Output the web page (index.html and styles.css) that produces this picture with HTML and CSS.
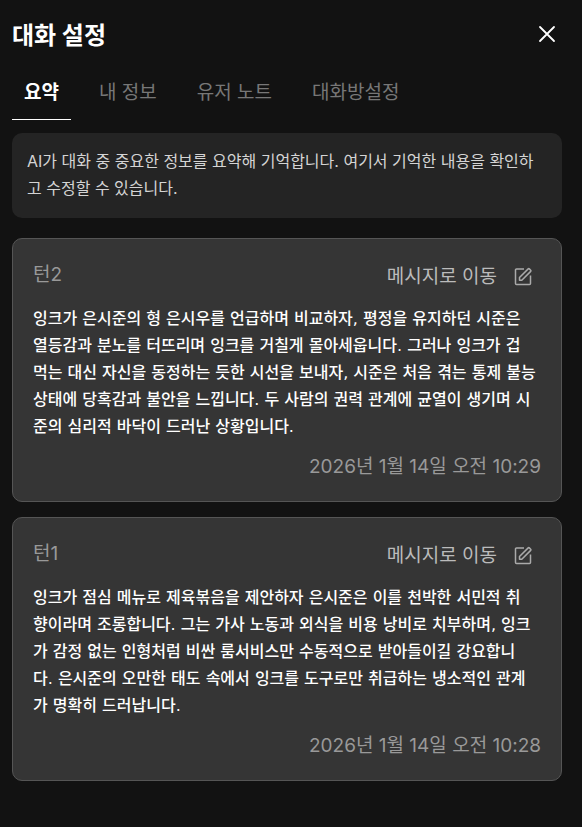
FILE: index.html
```html
<!DOCTYPE html>
<html lang="ko">
<head>
  <meta charset="UTF-8" />
  <meta name="viewport" content="width=device-width, initial-scale=1.0"/>
  <title>대화 설정</title>
  <link rel="stylesheet" href="styles.css">
</head>
<body>

  <header class="header">
    <h1>대화 설정</h1>
    <button class="icon-btn close" type="button" aria-label="닫기">
      <svg width="24" height="24" viewBox="0 0 24 24" fill="none" stroke="currentColor" stroke-width="1.8" stroke-linecap="round">
        <path d="M5 5l14 14M19 5L5 19"/>
      </svg>
    </button>
  </header>

  <nav class="tabs">
    <button class="tab active" type="button">요약</button>
    <button class="tab" type="button">내 정보</button>
    <button class="tab" type="button">유저 노트</button>
    <button class="tab" type="button">대화방설정</button>
  </nav>

  <main>
    <p class="info">AI가 대화 중 중요한 정보를 요약해 기억합니다. 여기서 기억한 내용을 확인하<br>고 수정할 수 있습니다.</p>

    <article class="card">
      <div class="card-head">
        <span class="turn">턴2</span>
        <div class="actions">
          <button class="move" type="button">메시지로 이동</button>
          <button class="icon-btn" type="button" aria-label="수정">
            <svg width="20" height="20" viewBox="0 0 20 20" fill="none" stroke="currentColor" stroke-width="1.5" stroke-linejoin="round">
              <path d="M11 2H3.500a1 1 0 0 0-1 1v13.500a1 1 0 0 0 1 1h13a1 1 0 0 0 1-1V8.500"/>
              <path d="M6.500 10.500l8.700-8.600a.8.800 0 0 1 1.100 0l1.400 1.400a.8.800 0 0 1 0 1.100l-8.900 8.900H6.500z"/>
            </svg>
          </button>
        </div>
      </div>
      <p class="summary">잉크가 은시준의 형 은시우를 언급하며 비교하자, 평정을 유지하던 시준은<br>열등감과 분노를 터뜨리며 잉크를 거칠게 몰아세웁니다. 그러나 잉크가 겁<br>먹는 대신 자신을 동정하는 듯한 시선을 보내자, 시준은 처음 겪는 통제 불능<br>상태에 당혹감과 불안을 느낍니다. 두 사람의 권력 관계에 균열이 생기며 시<br>준의 심리적 바닥이 드러난 상황입니다.</p>
      <time class="date" datetime="2026-01-14T10:29">2026년 1월 14일 오전 10:29</time>
    </article>

    <article class="card">
      <div class="card-head">
        <span class="turn">턴1</span>
        <div class="actions">
          <button class="move" type="button">메시지로 이동</button>
          <button class="icon-btn" type="button" aria-label="수정">
            <svg width="20" height="20" viewBox="0 0 20 20" fill="none" stroke="currentColor" stroke-width="1.5" stroke-linejoin="round">
              <path d="M11 2H3.500a1 1 0 0 0-1 1v13.500a1 1 0 0 0 1 1h13a1 1 0 0 0 1-1V8.500"/>
              <path d="M6.500 10.500l8.700-8.600a.8.800 0 0 1 1.100 0l1.400 1.400a.8.800 0 0 1 0 1.100l-8.900 8.900H6.500z"/>
            </svg>
          </button>
        </div>
      </div>
      <p class="summary">잉크가 점심 메뉴로 제육볶음을 제안하자 은시준은 이를 천박한 서민적 취<br>향이라며 조롱합니다. 그는 가사 노동과 외식을 비용 낭비로 치부하며, 잉크<br>가 감정 없는 인형처럼 비싼 룸서비스만 수동적으로 받아들이길 강요합니<br>다. 은시준의 오만한 태도 속에서 잉크를 도구로만 취급하는 냉소적인 관계<br>가 명확히 드러납니다.</p>
      <time class="date" datetime="2026-01-14T10:28">2026년 1월 14일 오전 10:28</time>
    </article>
  </main>

</body>
</html>
```
FILE: styles.css
```css
* {
  box-sizing: border-box;
}

body {
  margin: 0;
  padding: 20px 20px 20px 12px;
  min-height: 100vh;
  background: #121212;
  color: #fff;
  font-family: Inter, 'Noto Sans CJK KR', sans-serif;
  font-size: 19px;
}

button {
  padding: 0;
  border: 0;
  background: none;
  color: inherit;
  font: inherit;
  cursor: pointer;
}

.icon-btn {
  display: flex;
}

.header {
  display: flex;
  justify-content: space-between;
  align-items: flex-start;
}

h1 {
  margin: 0;
  font-size: 24px;
  line-height: 32px;
  font-weight: 700;
}

.close {
  margin: 2px 3px 0 0;
}

.tabs {
  display: flex;
  gap: 16px;
  margin-top: 12px;
  font-family: 'Noto Sans CJK KR', sans-serif;
}

.tab {
  padding: 0 12px 2px;
  height: 56px;
  line-height: 28px;
  color: #777;
  border-bottom: 1px solid transparent;
}

.tab.active {
  color: #fff;
  font-weight: 700;
  border-bottom-color: #fff;
}

.info,
.summary {
  margin: 0;
  font-size: 16px;
  line-height: 27px;
  white-space: nowrap;
}

.info {
  margin: 13px 0 20px;
  padding: 15px 15px 16px;
  border-radius: 10px;
  background: #242424;
  color: #d4d4d4;
}

.card {
  display: flex;
  flex-direction: column;
  margin-bottom: 15px;
  padding: 20px;
  border: 1px solid #555;
  border-radius: 10px;
  background: #353535;
}

.card-head {
  display: flex;
  justify-content: space-between;
  align-items: flex-start;
  line-height: 32px;
  margin-bottom: 10px;
}

.turn {
  color: #999;
}

.actions {
  display: flex;
  align-items: center;
  gap: 16px;
  height: 36px;
  color: #bbb;
}

.actions .icon-btn {
  margin-right: 8px;
  color: #aaa;
}

.summary {
  font-family: 'DejaVu Sans', 'Noto Sans CJK KR', sans-serif;
  font-weight: 500;
}

.date {
  align-self: flex-end;
  margin-top: 13px;
  line-height: 28px;
  color: #999;
}
```
